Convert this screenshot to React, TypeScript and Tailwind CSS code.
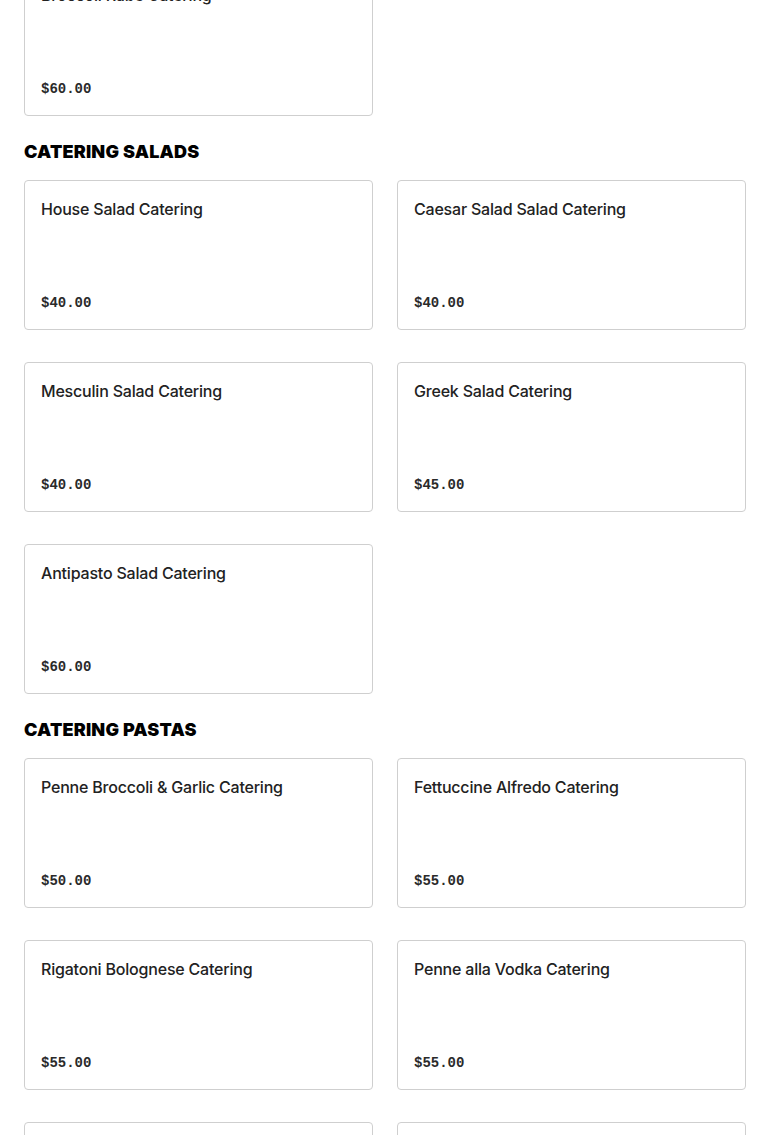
type Item = { name: string; price: string };

const sections: { title?: string; items: Item[] }[] = [
  { items: [{ name: 'Broccoli Rabe Catering', price: '$60.00' }] },
  {
    title: 'Catering Salads',
    items: [
      { name: 'House Salad Catering', price: '$40.00' },
      { name: 'Caesar Salad Salad Catering', price: '$40.00' },
      { name: 'Mesculin Salad Catering', price: '$40.00' },
      { name: 'Greek Salad Catering', price: '$45.00' },
      { name: 'Antipasto Salad Catering', price: '$60.00' },
    ],
  },
  {
    title: 'Catering Pastas',
    items: [
      { name: 'Penne Broccoli & Garlic Catering', price: '$50.00' },
      { name: 'Fettuccine Alfredo Catering', price: '$55.00' },
      { name: 'Rigatoni Bolognese Catering', price: '$55.00' },
      { name: 'Penne alla Vodka Catering', price: '$55.00' },
      { name: 'Baked Ziti Catering', price: '$50.00' },
      { name: 'Lasagna Catering', price: '$60.00' },
    ],
  },
];

function Card({ item }: { item: Item }) {
  return (
    <div className="h-[150px] border border-[#cfcfcf] rounded-[4px] bg-white p-4 flex flex-col justify-between">
      <h3 className="text-[16px] leading-6 font-medium text-[#222] font-['Inter',sans-serif] tracking-[-0.2px]">
        {item.name}
      </h3>
      <p className="text-[14px] leading-5 font-bold text-[#2a2a2a] font-['Liberation_Mono',monospace]">{item.price}</p>
    </div>
  );
}

export default function App() {
  return (
    <div className="min-h-screen bg-white overflow-hidden">
      <div className="px-6 -mt-[34px]">
        {sections.map((s, i) => (
          <section key={i}>
            {s.title && (
              <h2 className="mt-6 mb-4 text-[18px] leading-6 font-black uppercase text-black font-['Inter',sans-serif] tracking-[0.2px]">
                {s.title}
              </h2>
            )}
            <div className="grid grid-cols-2 gap-x-6 gap-y-8">
              {s.items.map((item) => (
                <Card key={item.name} item={item} />
              ))}
            </div>
          </section>
        ))}
      </div>
    </div>
  );
}
